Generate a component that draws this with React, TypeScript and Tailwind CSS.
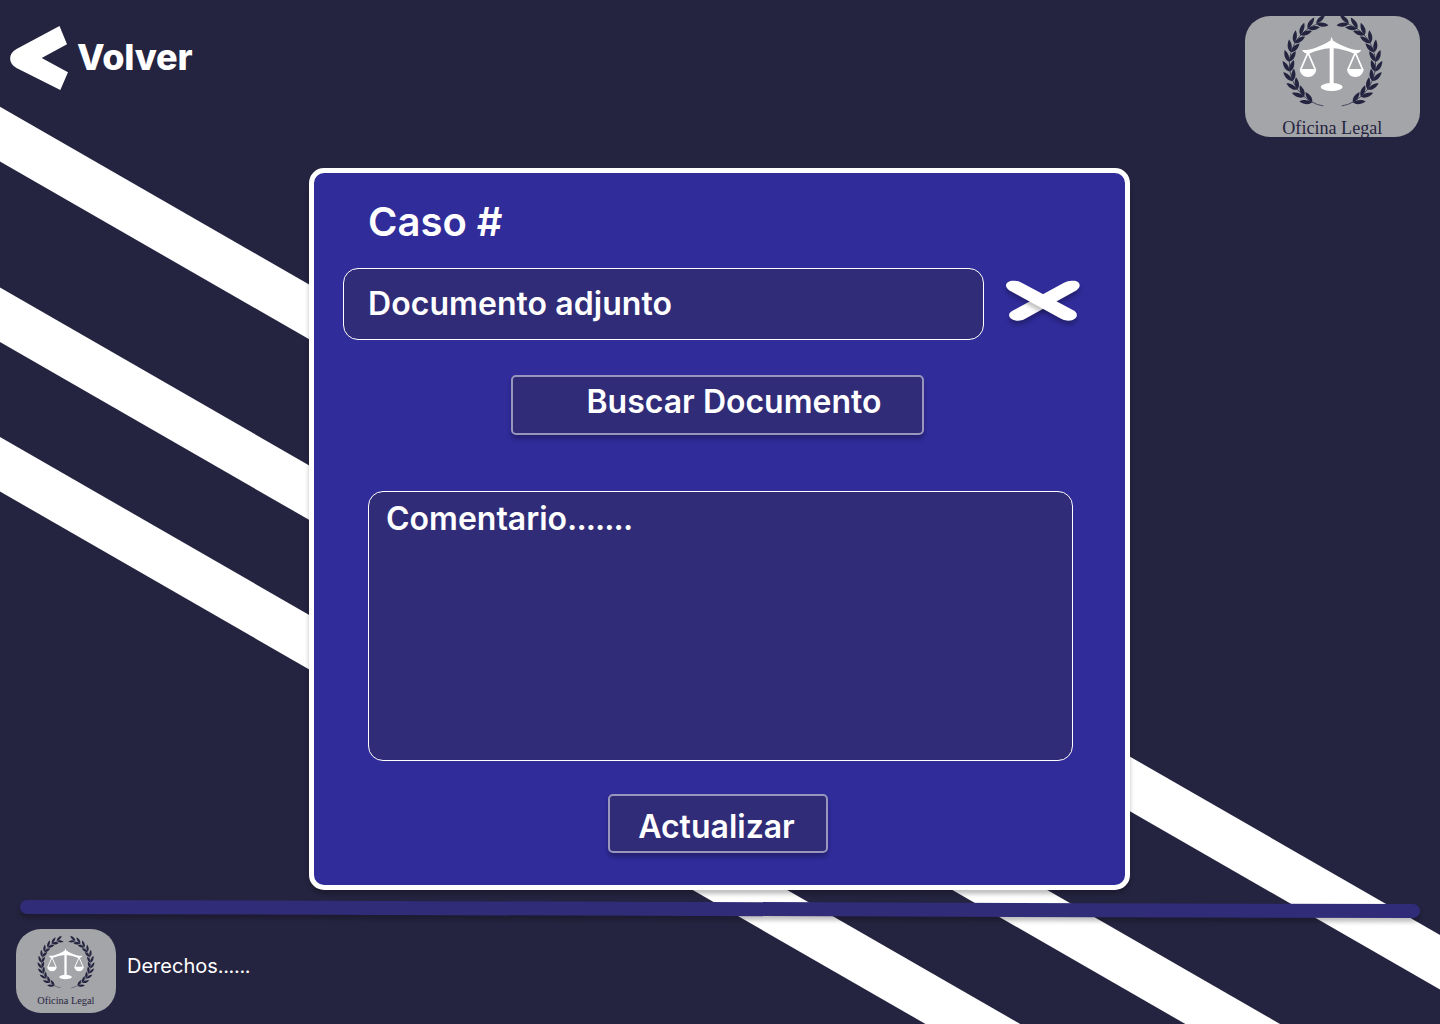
const LEAF_ANGLES = [118, 131, 144, 157, 170, 183, 196, 209, 222, 235, 248];

function Branch() {
  return (
    <g>
      <path
        d="M78.3 102.900 Q72 102 67 99 A43 43 0 0 1 72 21"
        fill="none"
        stroke="#252440"
        strokeWidth="0.7"
      />
      {LEAF_ANGLES.map((deg) => {
        const a = (deg * Math.PI) / 180;
        const x = 87.5 + 43.4 * Math.cos(a);
        const y = 61 + 43.4 * Math.sin(a);
        return (
          <g key={deg} transform={`translate(${x.toFixed(2)} ${y.toFixed(2)}) rotate(${deg + 91})`} fill="#252440">
            <path d="M0 0C1.4 -4.200 6 -6 11.500 -5.400C9.400 -1.800 4.600 0.500 0 0Z" />
            <path d="M0 0C1.4 4.300 5.500 6.200 10.800 5.900C9 2 4.600 -0.500 0 0Z" />
          </g>
        );
      })}
    </g>
  );
}

function Logo() {
  return (
    <svg viewBox="0 0 175 147" preserveAspectRatio="xMidYMid slice" className="block h-full w-full">
      <Branch />
      <g transform="translate(175 0) scale(-1 1)">
        <Branch />
      </g>
      <g transform="translate(-10 2) scale(0.3333)" fill="#fff">
        <path d="M290 95L294 107Q299 109 304 113Q340 131 360 134Q371 136 379 134Q374 146 358 146Q325 132 296 130V238H284V130Q255 132 222 146Q206 146 201 134Q209 136 220 134Q240 131 276 113Q281 109 286 107Z" />
        <ellipse cx="290" cy="246" rx="33" ry="12" />
        <path d="M194 192H244C243 206 233 216 219 216S195 206 194 192Z" />
        <path d="M336 192H386C385 206 375 216 361 216S337 206 336 192Z" />
        <path d="M219 143L197 194M219 143L241 194M361 143L339 194M361 143L383 194" stroke="#fff" strokeWidth="5" fill="none" />
      </g>
      <text
        x="37.3"
        y="130.9"
        fontSize="19.5"
        textLength="100"
        lengthAdjust="spacingAndGlyphs"
        fill="#252440"
        fontFamily="'Liberation Serif', serif"
      >
        Oficina Legal
      </text>
    </svg>
  );
}

function Stripes() {
  return (
    <svg className="absolute inset-0" width="1440" height="1024" viewBox="0 0 1440 1024" fill="#fff">
      <path d="M0 106.700L1440 935V989.500L0 161.5Z" />
      <path d="M0 287.5L1440 1116V1170.500L0 342Z" />
      <path d="M0 437L1440 1265.500V1320L0 491.5Z" />
    </svg>
  );
}

function BackArrow() {
  return (
    <svg width="60" height="66" viewBox="0 0 60 66" fill="#fff">
      <path d="M49.500 1L57 19.300L31.700 33L58 47.300L50.300 65L6.500 43C-2 38.500 -2 28.500 6.500 24Z" />
    </svg>
  );
}

function RemoveIcon() {
  return (
    <svg width="80" height="50" viewBox="0 0 240 150" fill="#fff" className="overflow-visible">
      <g className="drop-shadow-[0_12px_6px_rgba(0,0,0,0.25)]">
        <path d="M171 17Q183 10 197 11C212 11 219 18 218 27Q217 33 209 40L60 122Q48 131 34 131C10 131 -3 114 14 103Z" />
      </g>
      <g className="drop-shadow-[0_12px_6px_rgba(0,0,0,0.25)]">
        <path d="M44 17Q34 10 20 11C5 11 -4 18 -3 27Q-2 33 6 40L158 123Q170 131 184 131C210 131 216 112 203 102Z" />
      </g>
    </svg>
  );
}

export default function App() {
  return (
    <div className="relative h-[1024px] w-[1440px] overflow-hidden bg-[#252440] font-['Inter',sans-serif] text-white">
      <Stripes />
      <div className="relative flex h-full flex-col">
        <header className="flex h-[168px] shrink-0 items-start justify-between pr-5 pl-2.5">
          <button className="mt-[25px] flex items-center gap-[7px]">
            <BackArrow />
            <span className="-mt-0.5 text-[36px] leading-[44px] font-extrabold tracking-[-0.2px]">Volver</span>
          </button>
          <div className="mt-4 h-[121px] w-[175px] overflow-hidden rounded-[25px] bg-[#a4a5a9]">
            <Logo />
          </div>
        </header>

        <main className="ml-[309px] flex h-[722px] w-[821px] shrink-0 flex-col rounded-[15px] border-5 border-white bg-[#302c9a] shadow-[0_4px_4px_rgba(0,0,0,0.25)]">
          <h1 className="mt-[25px] ml-[54px] text-[40px] leading-[48px] font-semibold">Caso #</h1>
          <div className="mt-[22px] ml-[29px] flex">
            <div className="flex h-[72px] w-[641px] items-center rounded-[15px] border border-white bg-[#302c78] pl-6 text-[32px] leading-10 font-semibold tracking-[0.06px]">
              Documento adjunto
            </div>
            <button className="mt-[9px] ml-[23px] self-start">
              <RemoveIcon />
            </button>
          </div>
          <button className="mt-[35px] ml-[197px] h-[60px] w-[413px] rounded-[5px] border-2 border-[#9896bc] bg-[#302c78] pb-1.5 pl-[33px] text-[32px] leading-10 font-semibold shadow-[0_4px_4px_rgba(0,0,0,0.25)]">
            Buscar Documento
          </button>
          <div className="mt-14 ml-[54px] h-[270px] w-[705px] rounded-[15px] border border-white bg-[#302c78] pt-[7px] pl-[17px] text-[32px] leading-10 font-semibold">
            Comentario<span className="tracking-[-0.9px]">.......</span>
          </div>
          <button className="mt-[33px] ml-[294px] h-[59px] w-[220px] rounded-[5px] border-2 border-[#9896bc] bg-[#302c78] pt-1.5 pr-[3px] text-[32px] leading-10 font-semibold shadow-[0_4px_4px_rgba(0,0,0,0.25)]">
            Actualizar
          </button>
        </main>

        <div className="mt-3 ml-5 h-3.5 w-[1400px] shrink-0 rotate-[0.17deg] rounded-full bg-[#302c78] shadow-[0_4px_4px_rgba(0,0,0,0.25)]" />

        <footer className="mt-[13px] ml-4 flex">
          <div className="h-[84px] w-[100px] overflow-hidden rounded-[25px] bg-[#a4a5a9]">
            <Logo />
          </div>
          <span className="mt-[25px] ml-[11px] text-[20px] leading-6">
            Derechos<span className="tracking-[-0.35px]">......</span>
          </span>
        </footer>
      </div>
    </div>
  );
}
